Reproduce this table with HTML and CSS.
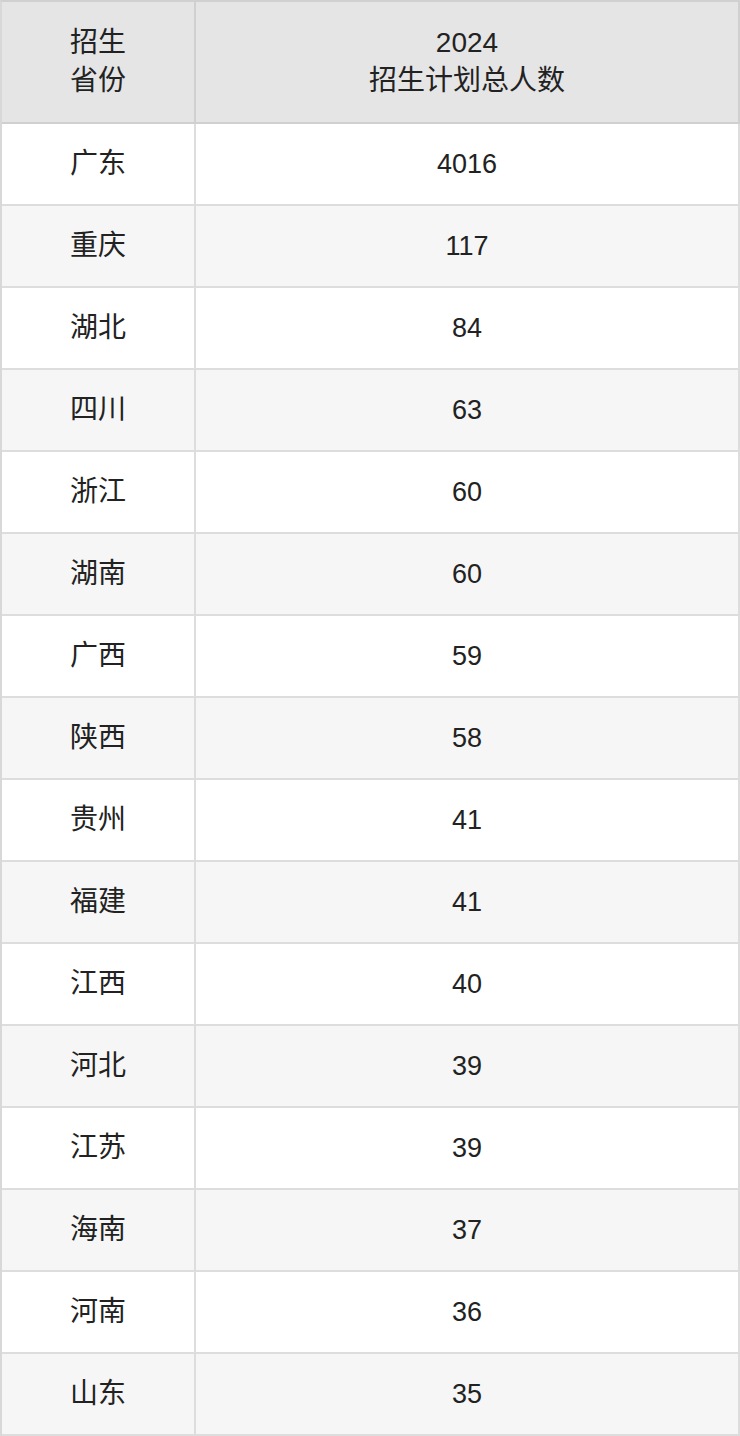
FILE: index.html
```html
<!DOCTYPE html>
<html lang="zh">
<head>
<meta charset="utf-8">
<link rel="stylesheet" href="styles.css">
</head>
<body>
<table class="plan">
  <thead>
    <tr>
      <th class="prov">招生<br>省份</th>
      <th class="num">2024<br>招生计划总人数</th>
    </tr>
  </thead>
  <tbody>
    <tr><td>广东</td><td class="val">4016</td></tr>
    <tr><td>重庆</td><td class="val">117</td></tr>
    <tr><td>湖北</td><td class="val">84</td></tr>
    <tr><td>四川</td><td class="val">63</td></tr>
    <tr><td>浙江</td><td class="val">60</td></tr>
    <tr><td>湖南</td><td class="val">60</td></tr>
    <tr><td>广西</td><td class="val">59</td></tr>
    <tr><td>陕西</td><td class="val">58</td></tr>
    <tr><td>贵州</td><td class="val">41</td></tr>
    <tr><td>福建</td><td class="val">41</td></tr>
    <tr><td>江西</td><td class="val">40</td></tr>
    <tr><td>河北</td><td class="val">39</td></tr>
    <tr><td>江苏</td><td class="val">39</td></tr>
    <tr><td>海南</td><td class="val">37</td></tr>
    <tr><td>河南</td><td class="val">36</td></tr>
    <tr><td>山东</td><td class="val">35</td></tr>
  </tbody>
</table>
</body>
</html>
```
FILE: styles.css
```css
html, body {
  margin: 0;
  padding: 0;
  background: #ffffff;
}
.plan {
  width: 740px;
  border-collapse: separate;
  border-spacing: 0;
  border-top: 2px solid #d0d0d0;
  border-left: 2px solid #d8d8d8;
  font-family: "Liberation Sans", "Noto Sans CJK SC", sans-serif;
  font-size: 28px;
  line-height: 38px;
  color: #222222;
  table-layout: fixed;
}
.plan th, .plan td {
  padding: 0;
  text-align: center;
  vertical-align: middle;
  border-right: 2px solid #dddddd;
  border-bottom: 2px solid #dddddd;
  font-weight: normal;
}
.plan th {
  height: 120px;
  background: #e5e5e5;
  border-color: #d0d0d0;
}
.plan th.prov {
  width: 192px;
}
.plan td {
  height: 80px;
}
.plan td.val {
  font-size: 27px;
}
.plan tbody tr:nth-child(odd) td {
  background: #ffffff;
}
.plan tbody tr:nth-child(even) td {
  background: #f6f6f6;
}
```
